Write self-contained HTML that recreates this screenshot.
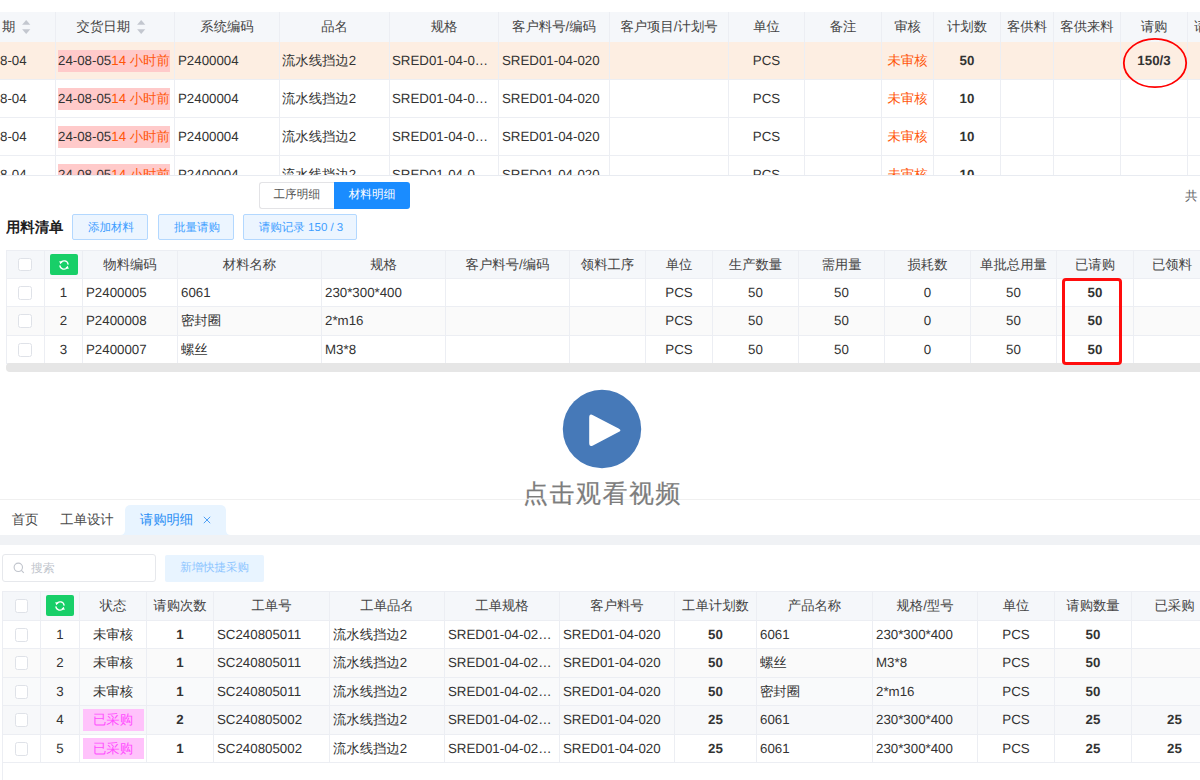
<!DOCTYPE html><html><head><meta charset="utf-8"><style>
html,body{margin:0;padding:0;text-rendering:geometricPrecision;width:1200px;height:780px;overflow:hidden;background:#fff;font-family:"Liberation Sans",sans-serif;font-size:13.3px;color:#333;position:relative}
div{box-sizing:border-box}
.c{font-size:1.005em}
.cb{position:absolute;width:13.5px;height:13.5px;border:1px solid #dfe2e8;border-radius:2.5px;background:#fff}
</style></head><body>
<div style="position:absolute;left:0;top:0;width:1200px;height:176px;overflow:hidden">
<div style="position:absolute;left:0px;top:12px;width:1200px;height:30px;background:#f5f7fa"></div>
<div style="position:absolute;left:0px;top:42px;width:1200px;height:37px;background:#fdeee2"></div>
<div style="position:absolute;left:0px;top:79px;width:1200px;height:1px;background:#eceef3"></div>
<div style="position:absolute;left:0px;top:117px;width:1200px;height:1px;background:#eceef3"></div>
<div style="position:absolute;left:0px;top:155px;width:1200px;height:1px;background:#eceef3"></div>
<div style="position:absolute;left:0px;top:193px;width:1200px;height:1px;background:#eceef3"></div>
<div style="position:absolute;left:55px;top:12px;width:1px;height:164px;background:#eceef3"></div>
<div style="position:absolute;left:174px;top:12px;width:1px;height:164px;background:#eceef3"></div>
<div style="position:absolute;left:279px;top:12px;width:1px;height:164px;background:#eceef3"></div>
<div style="position:absolute;left:389px;top:12px;width:1px;height:164px;background:#eceef3"></div>
<div style="position:absolute;left:498px;top:12px;width:1px;height:164px;background:#eceef3"></div>
<div style="position:absolute;left:609px;top:12px;width:1px;height:164px;background:#eceef3"></div>
<div style="position:absolute;left:728px;top:12px;width:1px;height:164px;background:#eceef3"></div>
<div style="position:absolute;left:804px;top:12px;width:1px;height:164px;background:#eceef3"></div>
<div style="position:absolute;left:881px;top:12px;width:1px;height:164px;background:#eceef3"></div>
<div style="position:absolute;left:933px;top:12px;width:1px;height:164px;background:#eceef3"></div>
<div style="position:absolute;left:1000px;top:12px;width:1px;height:164px;background:#eceef3"></div>
<div style="position:absolute;left:1053px;top:12px;width:1px;height:164px;background:#eceef3"></div>
<div style="position:absolute;left:1120px;top:12px;width:1px;height:164px;background:#eceef3"></div>
<div style="position:absolute;left:1187px;top:12px;width:1px;height:164px;background:#eceef3"></div>
<div style="position:absolute;left:0px;top:12px;width:22px;height:30px;line-height:30px;text-align:left;white-space:nowrap;overflow:hidden;padding:0 2px;color:#444"><span class="c">期</span></div>
<svg style="position:absolute;left:22px;top:20px" width="10" height="14" viewBox="0 0 10 14"><path d="M4.2 0 L8.3 4.8 L0.1 4.8Z" fill="#c3c7cf"/><path d="M4.2 14 L8.3 9.2 L0.1 9.2Z" fill="#c3c7cf"/></svg>
<div style="position:absolute;left:55px;top:12px;width:75px;height:30px;line-height:30px;text-align:right;white-space:nowrap;overflow:hidden;padding:0 0px;color:#444"><span class="c">交货日期</span></div>
<svg style="position:absolute;left:136.6px;top:20px" width="10" height="14" viewBox="0 0 10 14"><path d="M4.2 0 L8.3 4.8 L0.1 4.8Z" fill="#c3c7cf"/><path d="M4.2 14 L8.3 9.2 L0.1 9.2Z" fill="#c3c7cf"/></svg>
<div style="position:absolute;left:175px;top:12px;width:104px;height:30px;line-height:30px;text-align:center;white-space:nowrap;overflow:hidden;padding:0 0px;color:#444"><span class="c">系统编码</span></div>
<div style="position:absolute;left:280px;top:12px;width:109px;height:30px;line-height:30px;text-align:center;white-space:nowrap;overflow:hidden;padding:0 0px;color:#444"><span class="c">品名</span></div>
<div style="position:absolute;left:390px;top:12px;width:108px;height:30px;line-height:30px;text-align:center;white-space:nowrap;overflow:hidden;padding:0 0px;color:#444"><span class="c">规格</span></div>
<div style="position:absolute;left:499px;top:12px;width:110px;height:30px;line-height:30px;text-align:center;white-space:nowrap;overflow:hidden;padding:0 0px;color:#444"><span class="c">客户料号</span>/<span class="c">编码</span></div>
<div style="position:absolute;left:610px;top:12px;width:118px;height:30px;line-height:30px;text-align:center;white-space:nowrap;overflow:hidden;padding:0 0px;color:#444"><span class="c">客户项目</span>/<span class="c">计划号</span></div>
<div style="position:absolute;left:729px;top:12px;width:75px;height:30px;line-height:30px;text-align:center;white-space:nowrap;overflow:hidden;padding:0 0px;color:#444"><span class="c">单位</span></div>
<div style="position:absolute;left:805px;top:12px;width:76px;height:30px;line-height:30px;text-align:center;white-space:nowrap;overflow:hidden;padding:0 0px;color:#444"><span class="c">备注</span></div>
<div style="position:absolute;left:882px;top:12px;width:51px;height:30px;line-height:30px;text-align:center;white-space:nowrap;overflow:hidden;padding:0 0px;color:#444"><span class="c">审核</span></div>
<div style="position:absolute;left:934px;top:12px;width:66px;height:30px;line-height:30px;text-align:center;white-space:nowrap;overflow:hidden;padding:0 0px;color:#444"><span class="c">计划数</span></div>
<div style="position:absolute;left:1001px;top:12px;width:52px;height:30px;line-height:30px;text-align:center;white-space:nowrap;overflow:hidden;padding:0 0px;color:#444"><span class="c">客供料</span></div>
<div style="position:absolute;left:1054px;top:12px;width:66px;height:30px;line-height:30px;text-align:center;white-space:nowrap;overflow:hidden;padding:0 0px;color:#444"><span class="c">客供来料</span></div>
<div style="position:absolute;left:1121px;top:12px;width:66px;height:30px;line-height:30px;text-align:center;white-space:nowrap;overflow:hidden;padding:0 0px;color:#444"><span class="c">请购</span></div>
<div style="position:absolute;left:1194px;top:12px;width:86px;height:30px;line-height:30px;text-align:left;white-space:nowrap;overflow:hidden;padding:0 0px;color:#444"><span class="c">请购</span></div>
<div style="position:absolute;left:0px;top:42px;width:54px;height:37px;line-height:37px;text-align:left;white-space:nowrap;overflow:hidden;padding:0 0px;color:#333">8-04</div>
<div style="position:absolute;left:58px;top:50px;height:22px;line-height:22px;background:#ffcaca;white-space:nowrap;color:#333">24-08-05<span style="color:#ff570a">14 <span class=c>小时前</span></span></div>
<div style="position:absolute;left:178px;top:42px;width:101px;height:37px;line-height:37px;text-align:left;white-space:nowrap;overflow:hidden;padding:0 0px;color:#333">P2400004</div>
<div style="position:absolute;left:282px;top:42px;width:107px;height:37px;line-height:37px;text-align:left;white-space:nowrap;overflow:hidden;padding:0 0px;color:#333"><span class="c">流水线挡边</span>2</div>
<div style="position:absolute;left:392px;top:42px;width:106px;height:37px;line-height:37px;text-align:left;white-space:nowrap;overflow:hidden;padding:0 0px;color:#333">SRED01-04-0…</div>
<div style="position:absolute;left:502px;top:42px;width:107px;height:37px;line-height:37px;text-align:left;white-space:nowrap;overflow:hidden;padding:0 0px;color:#333">SRED01-04-020</div>
<div style="position:absolute;left:729px;top:42px;width:75px;height:37px;line-height:37px;text-align:center;white-space:nowrap;overflow:hidden;padding:0 0px;color:#333">PCS</div>
<div style="position:absolute;left:882px;top:42px;width:51px;height:37px;line-height:37px;text-align:center;white-space:nowrap;overflow:hidden;padding:0 0px;color:#ff570a"><span class="c">未审核</span></div>
<div style="position:absolute;left:934px;top:42px;width:66px;height:37px;line-height:37px;text-align:center;white-space:nowrap;overflow:hidden;padding:0 0px;color:#333;font-weight:bold">50</div>
<div style="position:absolute;left:1121px;top:42px;width:66px;height:37px;line-height:37px;text-align:center;white-space:nowrap;overflow:hidden;padding:0 0px;color:#333;font-weight:bold">150/3</div>
<div style="position:absolute;left:0px;top:80px;width:54px;height:37px;line-height:37px;text-align:left;white-space:nowrap;overflow:hidden;padding:0 0px;color:#333">8-04</div>
<div style="position:absolute;left:58px;top:88px;height:22px;line-height:22px;background:#ffcaca;white-space:nowrap;color:#333">24-08-05<span style="color:#ff570a">14 <span class=c>小时前</span></span></div>
<div style="position:absolute;left:178px;top:80px;width:101px;height:37px;line-height:37px;text-align:left;white-space:nowrap;overflow:hidden;padding:0 0px;color:#333">P2400004</div>
<div style="position:absolute;left:282px;top:80px;width:107px;height:37px;line-height:37px;text-align:left;white-space:nowrap;overflow:hidden;padding:0 0px;color:#333"><span class="c">流水线挡边</span>2</div>
<div style="position:absolute;left:392px;top:80px;width:106px;height:37px;line-height:37px;text-align:left;white-space:nowrap;overflow:hidden;padding:0 0px;color:#333">SRED01-04-0…</div>
<div style="position:absolute;left:502px;top:80px;width:107px;height:37px;line-height:37px;text-align:left;white-space:nowrap;overflow:hidden;padding:0 0px;color:#333">SRED01-04-020</div>
<div style="position:absolute;left:729px;top:80px;width:75px;height:37px;line-height:37px;text-align:center;white-space:nowrap;overflow:hidden;padding:0 0px;color:#333">PCS</div>
<div style="position:absolute;left:882px;top:80px;width:51px;height:37px;line-height:37px;text-align:center;white-space:nowrap;overflow:hidden;padding:0 0px;color:#ff570a"><span class="c">未审核</span></div>
<div style="position:absolute;left:934px;top:80px;width:66px;height:37px;line-height:37px;text-align:center;white-space:nowrap;overflow:hidden;padding:0 0px;color:#333;font-weight:bold">10</div>
<div style="position:absolute;left:0px;top:118px;width:54px;height:37px;line-height:37px;text-align:left;white-space:nowrap;overflow:hidden;padding:0 0px;color:#333">8-04</div>
<div style="position:absolute;left:58px;top:126px;height:22px;line-height:22px;background:#ffcaca;white-space:nowrap;color:#333">24-08-05<span style="color:#ff570a">14 <span class=c>小时前</span></span></div>
<div style="position:absolute;left:178px;top:118px;width:101px;height:37px;line-height:37px;text-align:left;white-space:nowrap;overflow:hidden;padding:0 0px;color:#333">P2400004</div>
<div style="position:absolute;left:282px;top:118px;width:107px;height:37px;line-height:37px;text-align:left;white-space:nowrap;overflow:hidden;padding:0 0px;color:#333"><span class="c">流水线挡边</span>2</div>
<div style="position:absolute;left:392px;top:118px;width:106px;height:37px;line-height:37px;text-align:left;white-space:nowrap;overflow:hidden;padding:0 0px;color:#333">SRED01-04-0…</div>
<div style="position:absolute;left:502px;top:118px;width:107px;height:37px;line-height:37px;text-align:left;white-space:nowrap;overflow:hidden;padding:0 0px;color:#333">SRED01-04-020</div>
<div style="position:absolute;left:729px;top:118px;width:75px;height:37px;line-height:37px;text-align:center;white-space:nowrap;overflow:hidden;padding:0 0px;color:#333">PCS</div>
<div style="position:absolute;left:882px;top:118px;width:51px;height:37px;line-height:37px;text-align:center;white-space:nowrap;overflow:hidden;padding:0 0px;color:#ff570a"><span class="c">未审核</span></div>
<div style="position:absolute;left:934px;top:118px;width:66px;height:37px;line-height:37px;text-align:center;white-space:nowrap;overflow:hidden;padding:0 0px;color:#333;font-weight:bold">10</div>
<div style="position:absolute;left:0px;top:156px;width:54px;height:37px;line-height:37px;text-align:left;white-space:nowrap;overflow:hidden;padding:0 0px;color:#333">8-04</div>
<div style="position:absolute;left:58px;top:164px;height:22px;line-height:22px;background:#ffcaca;white-space:nowrap;color:#333">24-08-05<span style="color:#ff570a">14 <span class=c>小时前</span></span></div>
<div style="position:absolute;left:178px;top:156px;width:101px;height:37px;line-height:37px;text-align:left;white-space:nowrap;overflow:hidden;padding:0 0px;color:#333">P2400004</div>
<div style="position:absolute;left:282px;top:156px;width:107px;height:37px;line-height:37px;text-align:left;white-space:nowrap;overflow:hidden;padding:0 0px;color:#333"><span class="c">流水线挡边</span>2</div>
<div style="position:absolute;left:392px;top:156px;width:106px;height:37px;line-height:37px;text-align:left;white-space:nowrap;overflow:hidden;padding:0 0px;color:#333">SRED01-04-0…</div>
<div style="position:absolute;left:502px;top:156px;width:107px;height:37px;line-height:37px;text-align:left;white-space:nowrap;overflow:hidden;padding:0 0px;color:#333">SRED01-04-020</div>
<div style="position:absolute;left:729px;top:156px;width:75px;height:37px;line-height:37px;text-align:center;white-space:nowrap;overflow:hidden;padding:0 0px;color:#333">PCS</div>
<div style="position:absolute;left:882px;top:156px;width:51px;height:37px;line-height:37px;text-align:center;white-space:nowrap;overflow:hidden;padding:0 0px;color:#ff570a"><span class="c">未审核</span></div>
<div style="position:absolute;left:934px;top:156px;width:66px;height:37px;line-height:37px;text-align:center;white-space:nowrap;overflow:hidden;padding:0 0px;color:#333;font-weight:bold">10</div>
</div>
<div style="position:absolute;left:0px;top:175px;width:1200px;height:1px;background:#e8ebf1"></div>
<svg style="position:absolute;left:1122px;top:37px" width="66" height="52" viewBox="0 0 66 52"><ellipse cx="33" cy="26" rx="31.2" ry="24.2" stroke="#f00" stroke-width="1.8" fill="none"/></svg>
<div style="position:absolute;left:259px;top:182px;width:75px;height:26.5px;border:1px solid #e3e3e6;border-right:none;border-radius:3px 0 0 3px;background:#fff"></div>
<div style="position:absolute;left:259.5px;top:181.5px;width:74.5px;height:26.0px;line-height:26.0px;text-align:center;white-space:nowrap;overflow:hidden;padding:0 0px;color:#555;font-size:11.6px"><span class="c">工序明细</span></div>
<div style="position:absolute;left:334px;top:182px;width:76px;height:26.5px;background:#1a8cff;border-radius:0 3px 3px 0"></div>
<div style="position:absolute;left:334px;top:181.5px;width:76px;height:26.0px;line-height:26.0px;text-align:center;white-space:nowrap;overflow:hidden;padding:0 0px;color:#fff;font-size:11.6px"><span class="c">材料明细</span></div>
<div style="position:absolute;left:1185px;top:182.5px;width:15px;height:26.0px;line-height:26.0px;text-align:left;white-space:nowrap;overflow:hidden;padding:0 0px;color:#606266;font-size:12.5px"><span class="c">共</span></div>
<div style="position:absolute;left:6px;top:215px;width:64px;height:26px;line-height:26px;text-align:left;white-space:nowrap;overflow:hidden;padding:0 0px;font-weight:bold;font-size:14.3px;color:#1f1f1f"><span class="c">用料清单</span></div>
<div style="position:absolute;left:72px;top:214px;width:76px;height:26px;background:#ecf5ff;border:1px solid #b3d8ff;border-radius:2px"></div>
<div style="position:absolute;left:73px;top:215px;width:76px;height:26px;line-height:26px;text-align:center;white-space:nowrap;overflow:hidden;padding:0 0px;color:#409eff;font-size:11.5px"><span class="c">添加材料</span></div>
<div style="position:absolute;left:158px;top:214px;width:76px;height:26px;background:#ecf5ff;border:1px solid #b3d8ff;border-radius:2px"></div>
<div style="position:absolute;left:159px;top:215px;width:76px;height:26px;line-height:26px;text-align:center;white-space:nowrap;overflow:hidden;padding:0 0px;color:#409eff;font-size:11.5px"><span class="c">批量请购</span></div>
<div style="position:absolute;left:243px;top:214px;width:114px;height:26px;background:#ecf5ff;border:1px solid #b3d8ff;border-radius:2px"></div>
<div style="position:absolute;left:244px;top:215px;width:114px;height:26px;line-height:26px;text-align:center;white-space:nowrap;overflow:hidden;padding:0 0px;color:#409eff;font-size:11.5px"><span class="c">请购记录</span> 150 / 3</div>
<div style="position:absolute;left:0;top:0;width:1200px;height:372px;overflow:hidden">
<div style="position:absolute;left:6px;top:250px;width:1194px;height:28px;background:#f5f7fa"></div>
<div style="position:absolute;left:6px;top:307px;width:1194px;height:28px;background:#fafafa"></div>
<div style="position:absolute;left:6px;top:250px;width:1194px;height:1px;background:#eceef3"></div>
<div style="position:absolute;left:6px;top:278px;width:1194px;height:1px;background:#eceef3"></div>
<div style="position:absolute;left:6px;top:306px;width:1194px;height:1px;background:#eceef3"></div>
<div style="position:absolute;left:6px;top:335px;width:1194px;height:1px;background:#eceef3"></div>
<div style="position:absolute;left:6px;top:363px;width:1194px;height:1px;background:#eceef3"></div>
<div style="position:absolute;left:6px;top:250px;width:1px;height:113px;background:#eceef3"></div>
<div style="position:absolute;left:44px;top:250px;width:1px;height:113px;background:#eceef3"></div>
<div style="position:absolute;left:82px;top:250px;width:1px;height:113px;background:#eceef3"></div>
<div style="position:absolute;left:177px;top:250px;width:1px;height:113px;background:#eceef3"></div>
<div style="position:absolute;left:321px;top:250px;width:1px;height:113px;background:#eceef3"></div>
<div style="position:absolute;left:445px;top:250px;width:1px;height:113px;background:#eceef3"></div>
<div style="position:absolute;left:569px;top:250px;width:1px;height:113px;background:#eceef3"></div>
<div style="position:absolute;left:645px;top:250px;width:1px;height:113px;background:#eceef3"></div>
<div style="position:absolute;left:712px;top:250px;width:1px;height:113px;background:#eceef3"></div>
<div style="position:absolute;left:798px;top:250px;width:1px;height:113px;background:#eceef3"></div>
<div style="position:absolute;left:884px;top:250px;width:1px;height:113px;background:#eceef3"></div>
<div style="position:absolute;left:970px;top:250px;width:1px;height:113px;background:#eceef3"></div>
<div style="position:absolute;left:1056px;top:250px;width:1px;height:113px;background:#eceef3"></div>
<div style="position:absolute;left:1133px;top:250px;width:1px;height:113px;background:#eceef3"></div>
<div style="position:absolute;left:83px;top:250px;width:94px;height:29px;line-height:29px;text-align:center;white-space:nowrap;overflow:hidden;padding:0 0px;color:#444"><span class="c">物料编码</span></div>
<div style="position:absolute;left:178px;top:250px;width:143px;height:29px;line-height:29px;text-align:center;white-space:nowrap;overflow:hidden;padding:0 0px;color:#444"><span class="c">材料名称</span></div>
<div style="position:absolute;left:322px;top:250px;width:123px;height:29px;line-height:29px;text-align:center;white-space:nowrap;overflow:hidden;padding:0 0px;color:#444"><span class="c">规格</span></div>
<div style="position:absolute;left:446px;top:250px;width:123px;height:29px;line-height:29px;text-align:center;white-space:nowrap;overflow:hidden;padding:0 0px;color:#444"><span class="c">客户料号</span>/<span class="c">编码</span></div>
<div style="position:absolute;left:570px;top:250px;width:75px;height:29px;line-height:29px;text-align:center;white-space:nowrap;overflow:hidden;padding:0 0px;color:#444"><span class="c">领料工序</span></div>
<div style="position:absolute;left:646px;top:250px;width:66px;height:29px;line-height:29px;text-align:center;white-space:nowrap;overflow:hidden;padding:0 0px;color:#444"><span class="c">单位</span></div>
<div style="position:absolute;left:713px;top:250px;width:85px;height:29px;line-height:29px;text-align:center;white-space:nowrap;overflow:hidden;padding:0 0px;color:#444"><span class="c">生产数量</span></div>
<div style="position:absolute;left:799px;top:250px;width:85px;height:29px;line-height:29px;text-align:center;white-space:nowrap;overflow:hidden;padding:0 0px;color:#444"><span class="c">需用量</span></div>
<div style="position:absolute;left:885px;top:250px;width:85px;height:29px;line-height:29px;text-align:center;white-space:nowrap;overflow:hidden;padding:0 0px;color:#444"><span class="c">损耗数</span></div>
<div style="position:absolute;left:971px;top:250px;width:85px;height:29px;line-height:29px;text-align:center;white-space:nowrap;overflow:hidden;padding:0 0px;color:#444"><span class="c">单批总用量</span></div>
<div style="position:absolute;left:1057px;top:250px;width:76px;height:29px;line-height:29px;text-align:center;white-space:nowrap;overflow:hidden;padding:0 0px;color:#444"><span class="c">已请购</span></div>
<div style="position:absolute;left:1134px;top:250px;width:76px;height:29px;line-height:29px;text-align:center;white-space:nowrap;overflow:hidden;padding:0 0px;color:#444"><span class="c">已领料</span></div>
<div class="cb" style="left:18.3px;top:257.5px"></div>
<div style="position:absolute;left:50px;top:254px;width:28px;height:21px;background:#18cf68;border-radius:2px"></div>
<svg style="position:absolute;left:57.0px;top:257.5px" width="14" height="14" viewBox="0 0 14 14"><path d="M3.6 4.6 A4.2 4.2 0 0 1 11.2 6.6" stroke="#fff" stroke-width="1.25" fill="none"/><path d="M10.4 9.4 A4.2 4.2 0 0 1 2.8 7.4" stroke="#fff" stroke-width="1.25" fill="none"/><path d="M2.3 3.0 L5.6 3.9 L3.2 6.3Z" fill="#fff"/><path d="M11.7 11.0 L8.4 10.1 L10.8 7.7Z" fill="#fff"/></svg>
<div class="cb" style="left:18.3px;top:286px"></div>
<div style="position:absolute;left:45px;top:279px;width:37px;height:27px;line-height:27px;text-align:center;white-space:nowrap;overflow:hidden;padding:0 0px;color:#333">1</div>
<div style="position:absolute;left:86px;top:279px;width:91px;height:27px;line-height:27px;text-align:left;white-space:nowrap;overflow:hidden;padding:0 0px;color:#333">P2400005</div>
<div style="position:absolute;left:181px;top:279px;width:140px;height:27px;line-height:27px;text-align:left;white-space:nowrap;overflow:hidden;padding:0 0px;color:#333">6061</div>
<div style="position:absolute;left:325px;top:279px;width:120px;height:27px;line-height:27px;text-align:left;white-space:nowrap;overflow:hidden;padding:0 0px;color:#333">230*300*400</div>
<div style="position:absolute;left:646px;top:279px;width:66px;height:27px;line-height:27px;text-align:center;white-space:nowrap;overflow:hidden;padding:0 0px;color:#333">PCS</div>
<div style="position:absolute;left:713px;top:279px;width:85px;height:27px;line-height:27px;text-align:center;white-space:nowrap;overflow:hidden;padding:0 0px;color:#333">50</div>
<div style="position:absolute;left:799px;top:279px;width:85px;height:27px;line-height:27px;text-align:center;white-space:nowrap;overflow:hidden;padding:0 0px;color:#333">50</div>
<div style="position:absolute;left:971px;top:279px;width:85px;height:27px;line-height:27px;text-align:center;white-space:nowrap;overflow:hidden;padding:0 0px;color:#333">50</div>
<div style="position:absolute;left:885px;top:279px;width:85px;height:27px;line-height:27px;text-align:center;white-space:nowrap;overflow:hidden;padding:0 0px;color:#333">0</div>
<div style="position:absolute;left:1057px;top:279px;width:76px;height:27px;line-height:27px;text-align:center;white-space:nowrap;overflow:hidden;padding:0 0px;color:#333;font-weight:bold">50</div>
<div class="cb" style="left:18.3px;top:314px"></div>
<div style="position:absolute;left:45px;top:307px;width:37px;height:28px;line-height:28px;text-align:center;white-space:nowrap;overflow:hidden;padding:0 0px;color:#333">2</div>
<div style="position:absolute;left:86px;top:307px;width:91px;height:28px;line-height:28px;text-align:left;white-space:nowrap;overflow:hidden;padding:0 0px;color:#333">P2400008</div>
<div style="position:absolute;left:181px;top:307px;width:140px;height:28px;line-height:28px;text-align:left;white-space:nowrap;overflow:hidden;padding:0 0px;color:#333"><span class="c">密封圈</span></div>
<div style="position:absolute;left:325px;top:307px;width:120px;height:28px;line-height:28px;text-align:left;white-space:nowrap;overflow:hidden;padding:0 0px;color:#333">2*m16</div>
<div style="position:absolute;left:646px;top:307px;width:66px;height:28px;line-height:28px;text-align:center;white-space:nowrap;overflow:hidden;padding:0 0px;color:#333">PCS</div>
<div style="position:absolute;left:713px;top:307px;width:85px;height:28px;line-height:28px;text-align:center;white-space:nowrap;overflow:hidden;padding:0 0px;color:#333">50</div>
<div style="position:absolute;left:799px;top:307px;width:85px;height:28px;line-height:28px;text-align:center;white-space:nowrap;overflow:hidden;padding:0 0px;color:#333">50</div>
<div style="position:absolute;left:971px;top:307px;width:85px;height:28px;line-height:28px;text-align:center;white-space:nowrap;overflow:hidden;padding:0 0px;color:#333">50</div>
<div style="position:absolute;left:885px;top:307px;width:85px;height:28px;line-height:28px;text-align:center;white-space:nowrap;overflow:hidden;padding:0 0px;color:#333">0</div>
<div style="position:absolute;left:1057px;top:307px;width:76px;height:28px;line-height:28px;text-align:center;white-space:nowrap;overflow:hidden;padding:0 0px;color:#333;font-weight:bold">50</div>
<div class="cb" style="left:18.3px;top:343px"></div>
<div style="position:absolute;left:45px;top:336px;width:37px;height:27px;line-height:27px;text-align:center;white-space:nowrap;overflow:hidden;padding:0 0px;color:#333">3</div>
<div style="position:absolute;left:86px;top:336px;width:91px;height:27px;line-height:27px;text-align:left;white-space:nowrap;overflow:hidden;padding:0 0px;color:#333">P2400007</div>
<div style="position:absolute;left:181px;top:336px;width:140px;height:27px;line-height:27px;text-align:left;white-space:nowrap;overflow:hidden;padding:0 0px;color:#333"><span class="c">螺丝</span></div>
<div style="position:absolute;left:325px;top:336px;width:120px;height:27px;line-height:27px;text-align:left;white-space:nowrap;overflow:hidden;padding:0 0px;color:#333">M3*8</div>
<div style="position:absolute;left:646px;top:336px;width:66px;height:27px;line-height:27px;text-align:center;white-space:nowrap;overflow:hidden;padding:0 0px;color:#333">PCS</div>
<div style="position:absolute;left:713px;top:336px;width:85px;height:27px;line-height:27px;text-align:center;white-space:nowrap;overflow:hidden;padding:0 0px;color:#333">50</div>
<div style="position:absolute;left:799px;top:336px;width:85px;height:27px;line-height:27px;text-align:center;white-space:nowrap;overflow:hidden;padding:0 0px;color:#333">50</div>
<div style="position:absolute;left:971px;top:336px;width:85px;height:27px;line-height:27px;text-align:center;white-space:nowrap;overflow:hidden;padding:0 0px;color:#333">50</div>
<div style="position:absolute;left:885px;top:336px;width:85px;height:27px;line-height:27px;text-align:center;white-space:nowrap;overflow:hidden;padding:0 0px;color:#333">0</div>
<div style="position:absolute;left:1057px;top:336px;width:76px;height:27px;line-height:27px;text-align:center;white-space:nowrap;overflow:hidden;padding:0 0px;color:#333;font-weight:bold">50</div>
<div style="position:absolute;left:6px;top:363px;width:1209px;height:8.5px;background:#e6e6e6;border-radius:4px"></div>
</div>
<div style="position:absolute;left:1062px;top:277.5px;width:60.200000000000045px;height:87.5px;border:3px solid #ff0d0d;border-radius:4px"></div>
<div style="position:absolute;left:0px;top:499px;width:1200px;height:1px;background:#f0f0f0"></div>
<svg style="position:absolute;left:118px;top:504px" width="116" height="32" viewBox="0 0 116 32"><path d="M2 31 Q7 31 7 26 L7 7 Q7 1 13 1 L102 1 Q108 1 108 7 L108 26 Q108 31 113 31 Z" fill="#e8f4ff"/></svg>
<div style="position:absolute;left:7px;top:504px;width:36px;height:31px;line-height:31px;text-align:center;white-space:nowrap;overflow:hidden;padding:0 0px;color:#4a4a4a"><span class="c">首页</span></div>
<div style="position:absolute;left:56px;top:504px;width:62px;height:31px;line-height:31px;text-align:center;white-space:nowrap;overflow:hidden;padding:0 0px;color:#4a4a4a"><span class="c">工单设计</span></div>
<div style="position:absolute;left:126.5px;top:504px;width:80.0px;height:31px;line-height:31px;text-align:center;white-space:nowrap;overflow:hidden;padding:0 0px;color:#2a8ef5"><span class="c">请购明细</span></div>
<svg style="position:absolute;left:203px;top:516px" width="8" height="8" viewBox="0 0 8 8"><path d="M0.8 0.8 L7.2 7.2 M7.2 0.8 L0.8 7.2" stroke="#3a95f5" stroke-width="0.9"/></svg>
<div style="position:absolute;left:0px;top:535px;width:1200px;height:10px;background:#f0f2f5"></div>
<div style="position:absolute;left:2px;top:554px;width:154px;height:28px;border:1px solid #e6e8ec;border-radius:3px;background:#fff"></div>
<svg style="position:absolute;left:13px;top:562px" width="12" height="12" viewBox="0 0 12 12"><circle cx="5.3" cy="5.3" r="4.2" stroke="#c0c4cc" stroke-width="1.1" fill="none"/><path d="M8.4 8.4 L10.8 10.8" stroke="#c0c4cc" stroke-width="1.1"/></svg>
<div style="position:absolute;left:31px;top:555px;width:69px;height:26px;line-height:26px;text-align:left;white-space:nowrap;overflow:hidden;padding:0 0px;color:#c0c4cc;font-size:11.8px"><span class="c">搜索</span></div>
<div style="position:absolute;left:165px;top:555px;width:99px;height:27px;background:#e8f4ff;border-radius:2px"></div>
<div style="position:absolute;left:165px;top:555px;width:99px;height:27px;line-height:27px;text-align:center;white-space:nowrap;overflow:hidden;padding:0 0px;color:#8cc5ff;font-size:11.4px"><span class="c">新增快捷采购</span></div>
<div style="position:absolute;left:2px;top:591px;width:1198px;height:29px;background:#f5f7fa"></div>
<div style="position:absolute;left:2px;top:621px;width:1198px;height:27px;background:#fff"></div>
<div style="position:absolute;left:2px;top:649px;width:1198px;height:28px;background:#fafafa"></div>
<div style="position:absolute;left:2px;top:678px;width:1198px;height:27px;background:#f9fafb"></div>
<div style="position:absolute;left:2px;top:706px;width:1198px;height:28px;background:#f7f8fa"></div>
<div style="position:absolute;left:2px;top:735px;width:1198px;height:27px;background:#fff"></div>
<div style="position:absolute;left:2px;top:591px;width:1198px;height:1px;background:#eceef3"></div>
<div style="position:absolute;left:2px;top:620px;width:1198px;height:1px;background:#eceef3"></div>
<div style="position:absolute;left:2px;top:648px;width:1198px;height:1px;background:#eceef3"></div>
<div style="position:absolute;left:2px;top:677px;width:1198px;height:1px;background:#eceef3"></div>
<div style="position:absolute;left:2px;top:705px;width:1198px;height:1px;background:#eceef3"></div>
<div style="position:absolute;left:2px;top:734px;width:1198px;height:1px;background:#eceef3"></div>
<div style="position:absolute;left:2px;top:762px;width:1198px;height:1px;background:#eceef3"></div>
<div style="position:absolute;left:2px;top:591px;width:1px;height:189px;background:#eceef3"></div>
<div style="position:absolute;left:40px;top:591px;width:1px;height:171px;background:#eceef3"></div>
<div style="position:absolute;left:79px;top:591px;width:1px;height:171px;background:#eceef3"></div>
<div style="position:absolute;left:146px;top:591px;width:1px;height:171px;background:#eceef3"></div>
<div style="position:absolute;left:213px;top:591px;width:1px;height:171px;background:#eceef3"></div>
<div style="position:absolute;left:329px;top:591px;width:1px;height:171px;background:#eceef3"></div>
<div style="position:absolute;left:444px;top:591px;width:1px;height:171px;background:#eceef3"></div>
<div style="position:absolute;left:559px;top:591px;width:1px;height:171px;background:#eceef3"></div>
<div style="position:absolute;left:674px;top:591px;width:1px;height:171px;background:#eceef3"></div>
<div style="position:absolute;left:756px;top:591px;width:1px;height:171px;background:#eceef3"></div>
<div style="position:absolute;left:872px;top:591px;width:1px;height:171px;background:#eceef3"></div>
<div style="position:absolute;left:977px;top:591px;width:1px;height:171px;background:#eceef3"></div>
<div style="position:absolute;left:1054px;top:591px;width:1px;height:171px;background:#eceef3"></div>
<div style="position:absolute;left:1131px;top:591px;width:1px;height:171px;background:#eceef3"></div>
<div style="position:absolute;left:80px;top:591px;width:66px;height:30px;line-height:30px;text-align:center;white-space:nowrap;overflow:hidden;padding:0 0px;color:#444"><span class="c">状态</span></div>
<div style="position:absolute;left:147px;top:591px;width:66px;height:30px;line-height:30px;text-align:center;white-space:nowrap;overflow:hidden;padding:0 0px;color:#444"><span class="c">请购次数</span></div>
<div style="position:absolute;left:214px;top:591px;width:115px;height:30px;line-height:30px;text-align:center;white-space:nowrap;overflow:hidden;padding:0 0px;color:#444"><span class="c">工单号</span></div>
<div style="position:absolute;left:330px;top:591px;width:114px;height:30px;line-height:30px;text-align:center;white-space:nowrap;overflow:hidden;padding:0 0px;color:#444"><span class="c">工单品名</span></div>
<div style="position:absolute;left:445px;top:591px;width:114px;height:30px;line-height:30px;text-align:center;white-space:nowrap;overflow:hidden;padding:0 0px;color:#444"><span class="c">工单规格</span></div>
<div style="position:absolute;left:560px;top:591px;width:114px;height:30px;line-height:30px;text-align:center;white-space:nowrap;overflow:hidden;padding:0 0px;color:#444"><span class="c">客户料号</span></div>
<div style="position:absolute;left:675px;top:591px;width:81px;height:30px;line-height:30px;text-align:center;white-space:nowrap;overflow:hidden;padding:0 0px;color:#444"><span class="c">工单计划数</span></div>
<div style="position:absolute;left:757px;top:591px;width:115px;height:30px;line-height:30px;text-align:center;white-space:nowrap;overflow:hidden;padding:0 0px;color:#444"><span class="c">产品名称</span></div>
<div style="position:absolute;left:873px;top:591px;width:104px;height:30px;line-height:30px;text-align:center;white-space:nowrap;overflow:hidden;padding:0 0px;color:#444"><span class="c">规格</span>/<span class="c">型号</span></div>
<div style="position:absolute;left:978px;top:591px;width:76px;height:30px;line-height:30px;text-align:center;white-space:nowrap;overflow:hidden;padding:0 0px;color:#444"><span class="c">单位</span></div>
<div style="position:absolute;left:1055px;top:591px;width:76px;height:30px;line-height:30px;text-align:center;white-space:nowrap;overflow:hidden;padding:0 0px;color:#444"><span class="c">请购数量</span></div>
<div style="position:absolute;left:1132px;top:591px;width:85px;height:30px;line-height:30px;text-align:center;white-space:nowrap;overflow:hidden;padding:0 0px;color:#444"><span class="c">已采购</span></div>
<div class="cb" style="left:14.9px;top:599px"></div>
<div style="position:absolute;left:46px;top:595px;width:28px;height:21px;background:#18cf68;border-radius:2px"></div>
<svg style="position:absolute;left:53.0px;top:598.5px" width="14" height="14" viewBox="0 0 14 14"><path d="M3.6 4.6 A4.2 4.2 0 0 1 11.2 6.6" stroke="#fff" stroke-width="1.25" fill="none"/><path d="M10.4 9.4 A4.2 4.2 0 0 1 2.8 7.4" stroke="#fff" stroke-width="1.25" fill="none"/><path d="M2.3 3.0 L5.6 3.9 L3.2 6.3Z" fill="#fff"/><path d="M11.7 11.0 L8.4 10.1 L10.8 7.7Z" fill="#fff"/></svg>
<div class="cb" style="left:14.9px;top:628px"></div>
<div style="position:absolute;left:41px;top:621px;width:38px;height:27px;line-height:27px;text-align:center;white-space:nowrap;overflow:hidden;padding:0 0px;color:#333">1</div>
<div style="position:absolute;left:80px;top:621px;width:66px;height:27px;line-height:27px;text-align:center;white-space:nowrap;overflow:hidden;padding:0 0px;color:#333"><span class="c">未审核</span></div>
<div style="position:absolute;left:147px;top:621px;width:66px;height:27px;line-height:27px;text-align:center;white-space:nowrap;overflow:hidden;padding:0 0px;color:#333;font-weight:bold">1</div>
<div style="position:absolute;left:217px;top:621px;width:112px;height:27px;line-height:27px;text-align:left;white-space:nowrap;overflow:hidden;padding:0 0px;color:#333">SC240805011</div>
<div style="position:absolute;left:333px;top:621px;width:111px;height:27px;line-height:27px;text-align:left;white-space:nowrap;overflow:hidden;padding:0 0px;color:#333"><span class="c">流水线挡边</span>2</div>
<div style="position:absolute;left:448px;top:621px;width:111px;height:27px;line-height:27px;text-align:left;white-space:nowrap;overflow:hidden;padding:0 0px;color:#333">SRED01-04-02…</div>
<div style="position:absolute;left:563px;top:621px;width:111px;height:27px;line-height:27px;text-align:left;white-space:nowrap;overflow:hidden;padding:0 0px;color:#333">SRED01-04-020</div>
<div style="position:absolute;left:675px;top:621px;width:81px;height:27px;line-height:27px;text-align:center;white-space:nowrap;overflow:hidden;padding:0 0px;color:#333;font-weight:bold">50</div>
<div style="position:absolute;left:760px;top:621px;width:112px;height:27px;line-height:27px;text-align:left;white-space:nowrap;overflow:hidden;padding:0 0px;color:#333">6061</div>
<div style="position:absolute;left:876px;top:621px;width:101px;height:27px;line-height:27px;text-align:left;white-space:nowrap;overflow:hidden;padding:0 0px;color:#333">230*300*400</div>
<div style="position:absolute;left:978px;top:621px;width:76px;height:27px;line-height:27px;text-align:center;white-space:nowrap;overflow:hidden;padding:0 0px;color:#333">PCS</div>
<div style="position:absolute;left:1055px;top:621px;width:76px;height:27px;line-height:27px;text-align:center;white-space:nowrap;overflow:hidden;padding:0 0px;color:#333;font-weight:bold">50</div>
<div class="cb" style="left:14.9px;top:656px"></div>
<div style="position:absolute;left:41px;top:649px;width:38px;height:28px;line-height:28px;text-align:center;white-space:nowrap;overflow:hidden;padding:0 0px;color:#333">2</div>
<div style="position:absolute;left:80px;top:649px;width:66px;height:28px;line-height:28px;text-align:center;white-space:nowrap;overflow:hidden;padding:0 0px;color:#333"><span class="c">未审核</span></div>
<div style="position:absolute;left:147px;top:649px;width:66px;height:28px;line-height:28px;text-align:center;white-space:nowrap;overflow:hidden;padding:0 0px;color:#333;font-weight:bold">1</div>
<div style="position:absolute;left:217px;top:649px;width:112px;height:28px;line-height:28px;text-align:left;white-space:nowrap;overflow:hidden;padding:0 0px;color:#333">SC240805011</div>
<div style="position:absolute;left:333px;top:649px;width:111px;height:28px;line-height:28px;text-align:left;white-space:nowrap;overflow:hidden;padding:0 0px;color:#333"><span class="c">流水线挡边</span>2</div>
<div style="position:absolute;left:448px;top:649px;width:111px;height:28px;line-height:28px;text-align:left;white-space:nowrap;overflow:hidden;padding:0 0px;color:#333">SRED01-04-02…</div>
<div style="position:absolute;left:563px;top:649px;width:111px;height:28px;line-height:28px;text-align:left;white-space:nowrap;overflow:hidden;padding:0 0px;color:#333">SRED01-04-020</div>
<div style="position:absolute;left:675px;top:649px;width:81px;height:28px;line-height:28px;text-align:center;white-space:nowrap;overflow:hidden;padding:0 0px;color:#333;font-weight:bold">50</div>
<div style="position:absolute;left:760px;top:649px;width:112px;height:28px;line-height:28px;text-align:left;white-space:nowrap;overflow:hidden;padding:0 0px;color:#333"><span class="c">螺丝</span></div>
<div style="position:absolute;left:876px;top:649px;width:101px;height:28px;line-height:28px;text-align:left;white-space:nowrap;overflow:hidden;padding:0 0px;color:#333">M3*8</div>
<div style="position:absolute;left:978px;top:649px;width:76px;height:28px;line-height:28px;text-align:center;white-space:nowrap;overflow:hidden;padding:0 0px;color:#333">PCS</div>
<div style="position:absolute;left:1055px;top:649px;width:76px;height:28px;line-height:28px;text-align:center;white-space:nowrap;overflow:hidden;padding:0 0px;color:#333;font-weight:bold">50</div>
<div class="cb" style="left:14.9px;top:685px"></div>
<div style="position:absolute;left:41px;top:678px;width:38px;height:27px;line-height:27px;text-align:center;white-space:nowrap;overflow:hidden;padding:0 0px;color:#333">3</div>
<div style="position:absolute;left:80px;top:678px;width:66px;height:27px;line-height:27px;text-align:center;white-space:nowrap;overflow:hidden;padding:0 0px;color:#333"><span class="c">未审核</span></div>
<div style="position:absolute;left:147px;top:678px;width:66px;height:27px;line-height:27px;text-align:center;white-space:nowrap;overflow:hidden;padding:0 0px;color:#333;font-weight:bold">1</div>
<div style="position:absolute;left:217px;top:678px;width:112px;height:27px;line-height:27px;text-align:left;white-space:nowrap;overflow:hidden;padding:0 0px;color:#333">SC240805011</div>
<div style="position:absolute;left:333px;top:678px;width:111px;height:27px;line-height:27px;text-align:left;white-space:nowrap;overflow:hidden;padding:0 0px;color:#333"><span class="c">流水线挡边</span>2</div>
<div style="position:absolute;left:448px;top:678px;width:111px;height:27px;line-height:27px;text-align:left;white-space:nowrap;overflow:hidden;padding:0 0px;color:#333">SRED01-04-02…</div>
<div style="position:absolute;left:563px;top:678px;width:111px;height:27px;line-height:27px;text-align:left;white-space:nowrap;overflow:hidden;padding:0 0px;color:#333">SRED01-04-020</div>
<div style="position:absolute;left:675px;top:678px;width:81px;height:27px;line-height:27px;text-align:center;white-space:nowrap;overflow:hidden;padding:0 0px;color:#333;font-weight:bold">50</div>
<div style="position:absolute;left:760px;top:678px;width:112px;height:27px;line-height:27px;text-align:left;white-space:nowrap;overflow:hidden;padding:0 0px;color:#333"><span class="c">密封圈</span></div>
<div style="position:absolute;left:876px;top:678px;width:101px;height:27px;line-height:27px;text-align:left;white-space:nowrap;overflow:hidden;padding:0 0px;color:#333">2*m16</div>
<div style="position:absolute;left:978px;top:678px;width:76px;height:27px;line-height:27px;text-align:center;white-space:nowrap;overflow:hidden;padding:0 0px;color:#333">PCS</div>
<div style="position:absolute;left:1055px;top:678px;width:76px;height:27px;line-height:27px;text-align:center;white-space:nowrap;overflow:hidden;padding:0 0px;color:#333;font-weight:bold">50</div>
<div class="cb" style="left:14.9px;top:713px"></div>
<div style="position:absolute;left:41px;top:706px;width:38px;height:28px;line-height:28px;text-align:center;white-space:nowrap;overflow:hidden;padding:0 0px;color:#333">4</div>
<div style="position:absolute;left:83px;top:709px;width:60.5px;height:22px;background:#ffc2fb"></div>
<div style="position:absolute;left:80px;top:706px;width:66px;height:28px;line-height:28px;text-align:center;white-space:nowrap;overflow:hidden;padding:0 0px;color:#ff4dff"><span class="c">已采购</span></div>
<div style="position:absolute;left:147px;top:706px;width:66px;height:28px;line-height:28px;text-align:center;white-space:nowrap;overflow:hidden;padding:0 0px;color:#333;font-weight:bold">2</div>
<div style="position:absolute;left:217px;top:706px;width:112px;height:28px;line-height:28px;text-align:left;white-space:nowrap;overflow:hidden;padding:0 0px;color:#333">SC240805002</div>
<div style="position:absolute;left:333px;top:706px;width:111px;height:28px;line-height:28px;text-align:left;white-space:nowrap;overflow:hidden;padding:0 0px;color:#333"><span class="c">流水线挡边</span>2</div>
<div style="position:absolute;left:448px;top:706px;width:111px;height:28px;line-height:28px;text-align:left;white-space:nowrap;overflow:hidden;padding:0 0px;color:#333">SRED01-04-02…</div>
<div style="position:absolute;left:563px;top:706px;width:111px;height:28px;line-height:28px;text-align:left;white-space:nowrap;overflow:hidden;padding:0 0px;color:#333">SRED01-04-020</div>
<div style="position:absolute;left:675px;top:706px;width:81px;height:28px;line-height:28px;text-align:center;white-space:nowrap;overflow:hidden;padding:0 0px;color:#333;font-weight:bold">25</div>
<div style="position:absolute;left:760px;top:706px;width:112px;height:28px;line-height:28px;text-align:left;white-space:nowrap;overflow:hidden;padding:0 0px;color:#333">6061</div>
<div style="position:absolute;left:876px;top:706px;width:101px;height:28px;line-height:28px;text-align:left;white-space:nowrap;overflow:hidden;padding:0 0px;color:#333">230*300*400</div>
<div style="position:absolute;left:978px;top:706px;width:76px;height:28px;line-height:28px;text-align:center;white-space:nowrap;overflow:hidden;padding:0 0px;color:#333">PCS</div>
<div style="position:absolute;left:1055px;top:706px;width:76px;height:28px;line-height:28px;text-align:center;white-space:nowrap;overflow:hidden;padding:0 0px;color:#333;font-weight:bold">25</div>
<div style="position:absolute;left:1132px;top:706px;width:85px;height:28px;line-height:28px;text-align:center;white-space:nowrap;overflow:hidden;padding:0 0px;color:#333;font-weight:bold">25</div>
<div class="cb" style="left:14.9px;top:742px"></div>
<div style="position:absolute;left:41px;top:735px;width:38px;height:27px;line-height:27px;text-align:center;white-space:nowrap;overflow:hidden;padding:0 0px;color:#333">5</div>
<div style="position:absolute;left:83px;top:738px;width:60.5px;height:21px;background:#ffc2fb"></div>
<div style="position:absolute;left:80px;top:735px;width:66px;height:27px;line-height:27px;text-align:center;white-space:nowrap;overflow:hidden;padding:0 0px;color:#ff4dff"><span class="c">已采购</span></div>
<div style="position:absolute;left:147px;top:735px;width:66px;height:27px;line-height:27px;text-align:center;white-space:nowrap;overflow:hidden;padding:0 0px;color:#333;font-weight:bold">1</div>
<div style="position:absolute;left:217px;top:735px;width:112px;height:27px;line-height:27px;text-align:left;white-space:nowrap;overflow:hidden;padding:0 0px;color:#333">SC240805002</div>
<div style="position:absolute;left:333px;top:735px;width:111px;height:27px;line-height:27px;text-align:left;white-space:nowrap;overflow:hidden;padding:0 0px;color:#333"><span class="c">流水线挡边</span>2</div>
<div style="position:absolute;left:448px;top:735px;width:111px;height:27px;line-height:27px;text-align:left;white-space:nowrap;overflow:hidden;padding:0 0px;color:#333">SRED01-04-02…</div>
<div style="position:absolute;left:563px;top:735px;width:111px;height:27px;line-height:27px;text-align:left;white-space:nowrap;overflow:hidden;padding:0 0px;color:#333">SRED01-04-020</div>
<div style="position:absolute;left:675px;top:735px;width:81px;height:27px;line-height:27px;text-align:center;white-space:nowrap;overflow:hidden;padding:0 0px;color:#333;font-weight:bold">25</div>
<div style="position:absolute;left:760px;top:735px;width:112px;height:27px;line-height:27px;text-align:left;white-space:nowrap;overflow:hidden;padding:0 0px;color:#333">6061</div>
<div style="position:absolute;left:876px;top:735px;width:101px;height:27px;line-height:27px;text-align:left;white-space:nowrap;overflow:hidden;padding:0 0px;color:#333">230*300*400</div>
<div style="position:absolute;left:978px;top:735px;width:76px;height:27px;line-height:27px;text-align:center;white-space:nowrap;overflow:hidden;padding:0 0px;color:#333">PCS</div>
<div style="position:absolute;left:1055px;top:735px;width:76px;height:27px;line-height:27px;text-align:center;white-space:nowrap;overflow:hidden;padding:0 0px;color:#333;font-weight:bold">25</div>
<div style="position:absolute;left:1132px;top:735px;width:85px;height:27px;line-height:27px;text-align:center;white-space:nowrap;overflow:hidden;padding:0 0px;color:#333;font-weight:bold">25</div>
<svg style="position:absolute;left:562px;top:389px" width="80" height="80" viewBox="0 0 80 80"><circle cx="40" cy="40" r="39.2" fill="#4679b8"/><path d="M27.2 28.6 Q27.2 24.3 31 26.2 L56.6 39.5 Q60.3 41.3 56.6 43.1 L31 56.4 Q27.2 58.3 27.2 54 Z" fill="#fff"/></svg>
<div style="position:absolute;left:523px;top:479px;height:30px;line-height:30px;white-space:nowrap;color:#7d7d7d;font-size:25px;letter-spacing:1.5px;-webkit-text-stroke:0.2px #7d7d7d">点击观看视频</div>
</body></html>
